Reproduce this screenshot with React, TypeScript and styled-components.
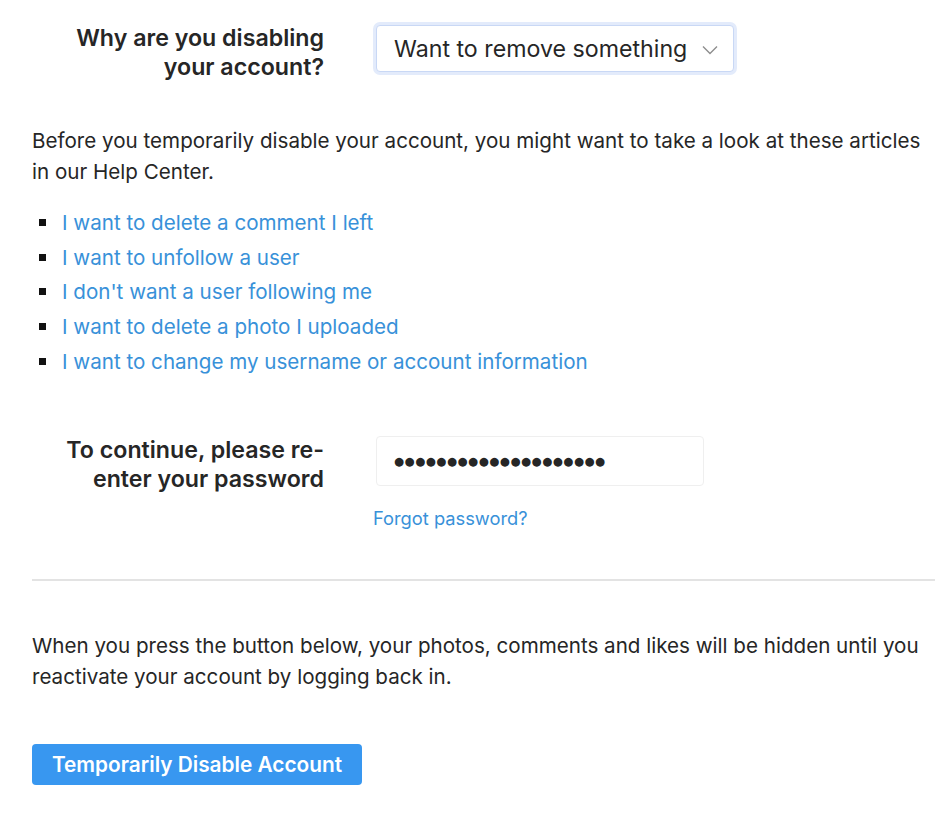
import React from "react";
import styled, { createGlobalStyle } from "styled-components";

const Global = createGlobalStyle`
  html, body { margin: 0; padding: 0; background: #ffffff; }
  body { font-family: Inter, "Noto Sans", "Liberation Sans", sans-serif; color: #262626; }
`;

const Page = styled.div`
  padding: 25px 15px 30px 32px;
`;

const FormRow = styled.div<{ $top?: number }>`
  display: grid;
  grid-template-columns: 292px 1fr;
  column-gap: 52px;
  align-items: start;
  margin-top: ${(p) => p.$top ?? 0}px;
`;

const RowLabel = styled.label<{ $offset?: number }>`
  text-align: right;
  font-size: 23.2px;
  font-weight: 600;
  line-height: 28.5px;
  color: #262626;
  margin-top: ${(p) => p.$offset ?? 0}px;
`;

const SelectBox = styled.div`
  width: 358px;
  height: 47px;
  box-sizing: border-box;
  border: 1px solid #c9d8f5;
  box-shadow: 0 0 0 3px #e3ebfb;
  border-radius: 4px;
  background: #fff;
  display: flex;
  align-items: center;
  justify-content: space-between;
  padding: 0 15px 0 17px;
  font-size: 23.2px;
  color: #262626;
`;

const Chevron = styled.svg`
  width: 16px;
  height: 10px;
  margin-top: 2px;
`;

const Paragraph = styled.p<{ $top: number }>`
  margin: ${(p) => p.$top}px 0 0;
  font-size: 20.6px;
  line-height: 31px;
  color: #262626;
`;

const LinkList = styled.ul`
  margin: 18px 0 0;
  padding: 0;
  list-style: none;
`;

const LinkItem = styled.li`
  display: flex;
  align-items: center;
  height: 34.7px;
  font-size: 20.6px;
  &::before {
    content: "";
    width: 7px;
    height: 7px;
    background: #111;
    margin: 0 16px 0 7px;
    flex: none;
  }
`;

const HelpLink = styled.a`
  color: #3891d9;
  text-decoration: none;
`;

const PasswordBox = styled.div`
  width: 328px;
  height: 50px;
  box-sizing: border-box;
  border: 1px solid #efefef;
  border-radius: 4px;
  background: #fff;
  display: flex;
  align-items: center;
  padding-left: 17px;
`;

const Dots = styled.span`
  font-family: "DejaVu Sans", sans-serif;
  font-size: 11.5px;
  letter-spacing: 0.55px;
  color: #262626;
`;

const Forgot = styled.a`
  grid-column: 2;
  margin: 15px 0 0 -3px;
  font-size: 18.3px;
  line-height: 20px;
  color: #3891d9;
  text-decoration: none;
`;

const Divider = styled.hr`
  margin: 51px 0 0;
  border: none;
  border-top: 2px solid #e3e3e3;
`;

const DisableButton = styled.button`
  margin-top: 52px;
  width: 330px;
  height: 41px;
  border: none;
  border-radius: 4px;
  background: #3897f0;
  color: #fff;
  font-family: Inter, "Liberation Sans", sans-serif;
  font-size: 20.8px;
  font-weight: 600;
  cursor: pointer;
`;

const links = [
  "I want to delete a comment I left",
  "I want to unfollow a user",
  "I don't want a user following me",
  "I want to delete a photo I uploaded",
  "I want to change my username or account information",
];

export default function App() {
  return (
    <>
      <Global />
      <Page>
        <FormRow>
          <RowLabel $offset={-1}>
            Why are you disabling
            <br />
            your account?
          </RowLabel>
          <SelectBox>
            <span>Want to remove something</span>
            <Chevron viewBox="0 0 16 10">
              <path d="M1 1.5 L8 8.5 L15 1.5" fill="none" stroke="#8e8e8e" strokeWidth="1.4" />
            </Chevron>
          </SelectBox>
        </FormRow>

        <Paragraph $top={44}>
          Before you temporarily disable your account, you might want to take a look at these articles in our Help Center.
        </Paragraph>

        <LinkList>
          {links.map((l) => (
            <LinkItem key={l}>
              <HelpLink href="#">{l}</HelpLink>
            </LinkItem>
          ))}
        </LinkList>

        <FormRow $top={58}>
          <RowLabel>
            To continue, please re-
            <br />
            enter your password
          </RowLabel>
          <PasswordBox>
            <Dots>{"●".repeat(20)}</Dots>
          </PasswordBox>
          <Forgot href="#">Forgot password?</Forgot>
        </FormRow>

        <Divider />

        <Paragraph $top={49}>
          When you press the button below, your photos, comments and likes will be hidden until you reactivate your account by logging back in.
        </Paragraph>

        <DisableButton>Temporarily Disable Account</DisableButton>
      </Page>
    </>
  );
}
